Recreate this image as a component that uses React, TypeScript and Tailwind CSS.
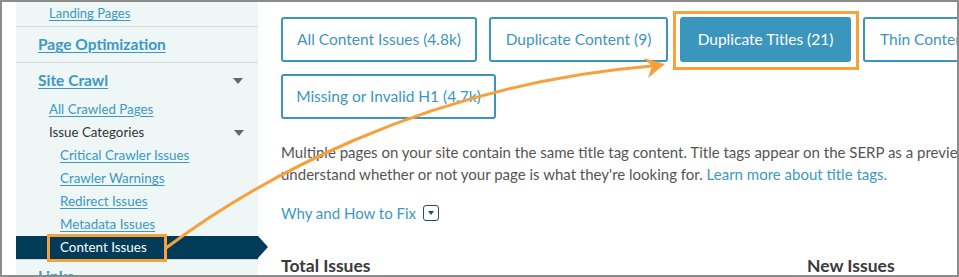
import React from "react";

const Caret = ({ className = "" }: { className?: string }) => (
  <svg width="10" height="6" viewBox="0 0 10 6" className={className}>
    <path d="M0 0 L10 0 L5 6 Z" fill="#666" />
  </svg>
);

export default function App() {
  const link = "text-[#3b99c3] underline underline-offset-[2px] decoration-1";
  return (
    <div className="relative w-[959px] h-[277px] overflow-hidden border-2 border-[#8c8c8c] bg-white flex font-['Lato',sans-serif]">
      <div className="w-[14px] shrink-0" />
      <aside className="w-[242px] shrink-0 bg-[#eef6f6] flex flex-col">
        <div className="h-[25px] shrink-0 flex items-center pl-[33px] border-b border-[#d3dbdb] text-[13px]">
          <span className={link}>Landing Pages</span>
        </div>
        <div className="h-[36px] shrink-0 flex items-center pl-[22px] border-b border-[#d3dbdb] text-[15.5px] font-bold">
          <span className={link}>Page Optimization</span>
        </div>
        <div className="h-[35px] shrink-0 flex items-center justify-between pl-[22px] pr-[15px] text-[15.5px] font-bold">
          <span className={link}>Site Crawl</span>
          <Caret />
        </div>
        <div className="h-[23px] shrink-0 flex items-center pl-[33px] text-[13.3px]">
          <span className={link}>All Crawled Pages</span>
        </div>
        <div className="h-[23px] shrink-0 flex items-center justify-between pl-[33px] pr-[14px] text-[13.3px] text-[#333]">
          <span>Issue Categories</span>
          <Caret />
        </div>
        {["Critical Crawler Issues", "Crawler Warnings", "Redirect Issues", "Metadata Issues"].map((t) => (
          <div key={t} className="h-[23px] shrink-0 flex items-center pl-[44px] text-[13.4px]">
            <span className={link}>{t}</span>
          </div>
        ))}
        <div className="relative h-[23px] shrink-0 flex items-center pl-[44px] text-[13.4px] text-white bg-[#003b57]">
          <span>Content Issues</span>
          <div className="absolute left-full top-0 w-0 h-0 border-y-[11.5px] border-y-transparent border-l-[10px] border-l-[#003b57]" />
        </div>
        <div className="h-[35px] shrink-0 flex items-center pl-[22px] border-t border-[#d3dbdb] text-[15.5px] font-bold">
          <span className={link}>Links</span>
        </div>
      </aside>
      <main className="flex-1 min-w-0 overflow-hidden pl-[23px] pt-[15px]">
        <div className="w-[900px] flex flex-wrap gap-x-[12px] gap-y-[12px] text-[15.5px]">
          <button className="h-[45px] w-[196px] flex items-center justify-center border-2 border-[#3b96bd] rounded-[3px] text-[#3b96bd]">
            All Content Issues (4.8k)
          </button>
          <button className="h-[45px] w-[179px] flex items-center justify-center border-2 border-[#3b96bd] rounded-[3px] text-[#3b96bd]">
            Duplicate Content (9)
          </button>
          <button className="h-[45px] w-[171px] flex items-center justify-center border-2 border-[#3b96bd] rounded-[3px] bg-[#3b96bd] text-white">
            Duplicate Titles (21)
          </button>
          <button className="h-[45px] w-[170px] flex items-center justify-start pl-[15px] border-2 border-[#3b96bd] rounded-[3px] text-[#3b96bd]">
            Thin Content (2)
          </button>
          <button className="h-[45px] w-[215px] flex items-center justify-center border-2 border-[#3b96bd] rounded-[3px] text-[#3b96bd]">
            Missing or Invalid H1 (4.7k)
          </button>
        </div>
        <p className="mt-[22px] w-[900px] whitespace-nowrap text-[15px] leading-[22px] text-[#555]">
          Multiple pages on your site contain the same title tag content. Title tags appear on the SERP as a preview of your page and help searchers
          <br />
          understand whether or not your page is what they're looking for.{" "}
          <span className="text-[#3b99c3]">Learn more about title tags.</span>
        </p>
        <div className="mt-[17px] h-[22px] flex items-center gap-[7px] text-[15px] text-[#3b99c3]">
          <span>Why and How to Fix</span>
          <span className="w-[16px] h-[16px] border-[1.5px] border-[#1f4e66] rounded-[3px] flex items-center justify-center">
            <svg width="6" height="4" viewBox="0 0 6 4">
              <path d="M0 0 L6 0 L3 4 Z" fill="#1f4e66" />
            </svg>
          </span>
        </div>
        <div className="mt-[30px] w-[700px] flex text-[17.5px] font-bold text-[#3a3a3a] leading-[24px]">
          <span className="w-[526px]">Total Issues</span>
          <span>New Issues</span>
        </div>
      </main>
      <svg
        className="absolute left-[-2px] top-[-2px] w-[959px] h-[277px] pointer-events-none"
        viewBox="0 0 959 277"
      >
        <rect x="48.5" y="235.5" width="117" height="25" fill="none" stroke="#f7a13c" strokeWidth="3" />
        <rect x="674.5" y="12.5" width="183" height="56" fill="none" stroke="#f7a13c" strokeWidth="3" />
        <path d="M166 248 C250 185 420 85 652 66" fill="none" stroke="#f7a13c" strokeWidth="3" strokeLinecap="round" />
        <path d="M665 64 L643 58 L652 66 L648 78 Z" fill="#f7a13c" />
      </svg>
    </div>
  );
}
